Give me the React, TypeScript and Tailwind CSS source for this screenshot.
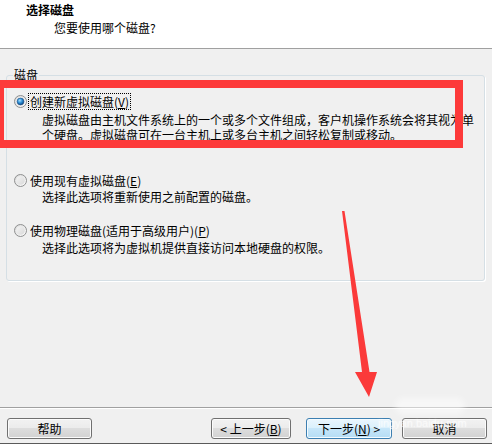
import React from "react";

function Radio({ checked, id }: { checked: boolean; id: string }) {
  return (
    <svg width="13" height="13" viewBox="0 0 13 13" className="shrink-0">
      <defs>
        <linearGradient id={`o${id}`} x1="0" y1="0" x2="1" y2="1">
          <stop offset="0" stopColor="#d8d8d8" />
          <stop offset="1" stopColor="#ffffff" />
        </linearGradient>
        <linearGradient id={`i${id}`} x1="0" y1="0" x2="1" y2="1">
          <stop offset="0" stopColor="#f4f4f4" />
          <stop offset="1" stopColor="#d9d9d9" />
        </linearGradient>
        <radialGradient id={`b${id}`} cx="0.4" cy="0.35" r="0.7">
          <stop offset="0" stopColor="#a7e0ff" />
          <stop offset="0.5" stopColor="#2d8fd5" />
          <stop offset="1" stopColor="#0b3f7a" />
        </radialGradient>
      </defs>
      <circle cx="6.5" cy="6.5" r="6" fill={`url(#o${id})`} stroke="#8e8f8f" strokeWidth="1" />
      <circle cx="6.5" cy="6.5" r="4.3" fill={`url(#i${id})`} />
      {checked && <circle cx="6.5" cy="6.5" r="3.4" fill={`url(#b${id})`} stroke="#1b4f86" strokeWidth="0.6" />}
    </svg>
  );
}

function Btn({ children, w, primary }: { children: React.ReactNode; w: string; primary?: boolean }) {
  return (
    <div
      className={
        primary
          ? `${w} h-[21px] flex items-center justify-center rounded-[3px] border border-[#3c7fb1] bg-[linear-gradient(to_bottom,#eaf6fd_0%,#d9f0fc_50%,#c6e6f9_50%,#b5ddf5_100%)] shadow-[inset_0_0_0_1px_#f4fbff] leading-[14px]`
          : `${w} h-[21px] flex items-center justify-center rounded-[3px] border border-[#707070] bg-[linear-gradient(to_bottom,#f2f2f2_0%,#ebebeb_50%,#dddddd_50%,#d2d2d2_100%)] shadow-[inset_0_0_0_1px_#fbfbfb] leading-[14px]`
      }
    >
      {children}
    </div>
  );
}

export default function App() {
  return (
    <div className="relative w-[492px] h-[444px] overflow-hidden bg-[#f0f0f0] text-[12px] text-black font-['Noto_Sans_CJK_SC','Noto_Sans',sans-serif]">
      {/* header */}
      <div className="h-[49px] bg-white border-b border-[#a0a0a0]">
        <div className="pt-[3px] pl-[26px] font-bold leading-[14px]">选择磁盘</div>
        <div className="pt-[4px] pl-[54px] leading-[14px]">您要使用哪个磁盘?</div>
      </div>

      {/* body */}
      <div className="h-[358px] pt-[26px]">
        <div className="relative ml-[6px] w-[479px] h-[206px] rounded-[3px] border border-[#d5dfe5] shadow-[1px_1px_0_#ffffff] pt-[17px] pl-[7px]">
          <div className="absolute left-[6px] top-[-7px] px-[1px] bg-[#f0f0f0] leading-[12px]">磁盘</div>

          {/* option 1 */}
          <div className="flex items-center h-[17px]">
            <Radio checked id="1" />
            <span className="ml-[2px] px-[1px] outline outline-1 outline-dotted outline-black leading-[15px]">
              创建新虚拟磁盘(<span className="underline">V</span>)
            </span>
          </div>
          <div className="mt-[2px] pl-[28px] leading-[15px] whitespace-nowrap">
            <div>虚拟磁盘由主机文件系统上的一个或多个文件组成，客户机操作系统会将其视为单</div>
            <div>个硬盘。虚拟磁盘可在一台主机上或多台主机之间轻松复制或移动。</div>
          </div>

          {/* option 2 */}
          <div className="flex items-center h-[16px] mt-[30px]">
            <Radio checked={false} id="2" />
            <span className="ml-[3px] leading-[15px]">
              使用现有虚拟磁盘(<span className="underline">E</span>)
            </span>
          </div>
          <div className="mt-[1px] pl-[28px] leading-[15px] whitespace-nowrap">选择此选项将重新使用之前配置的磁盘。</div>

          {/* option 3 */}
          <div className="flex items-center h-[16px] mt-[18px]">
            <Radio checked={false} id="3" />
            <span className="ml-[3px] leading-[15px]">
              使用物理磁盘(适用于高级用户)(<span className="underline">P</span>)
            </span>
          </div>
          <div className="mt-[2px] pl-[28px] leading-[15px] whitespace-nowrap">选择此选项将为虚拟机提供直接访问本地硬盘的权限。</div>
        </div>
      </div>

      {/* footer */}
      <div className="h-[37px] border-t border-[#a0a0a0] border-b border-b-[#5a5a5a] shadow-[inset_0_1px_0_#ffffff] pt-[10px] flex items-start">
        <div className="ml-[7px]">
          <Btn w="w-[85px]">帮助</Btn>
        </div>
        <div className="ml-auto mr-[5px] flex">
          <Btn w="w-[80px]">
            &lt; 上一步(<span className="underline">B</span>)
          </Btn>
          <div className="ml-[15px]">
            <Btn w="w-[86px]" primary>
              下一步(<span className="underline">N</span>) &gt;
            </Btn>
          </div>
          <div className="ml-[10px]">
            <Btn w="w-[85px]">取消</Btn>
          </div>
        </div>
      </div>

      {/* red highlight rectangle */}
      <div className="absolute left-[-4px] top-[80px] w-[467px] h-[68px] border-[8px] border-[#fd3a3a] pointer-events-none" />

      {/* red arrow */}
      <svg className="absolute left-0 top-0 pointer-events-none" width="492" height="444" viewBox="0 0 492 444">
        <polygon
          points="342,211 344.5,211 369.5,372 377,372 369,397 355,372 362,372"
          fill="#fb3a3a"
        />
      </svg>

      {/* watermark */}
      <div className="absolute left-[378px] top-[417px] text-[11px] leading-[12px] text-white/60 font-['Liberation_Sans',sans-serif] pointer-events-none [text-shadow:0_0_2px_rgba(255,255,255,0.6)]">
        jingyan.baidu.com
      </div>
      <div className="absolute left-[395px] top-[398px] w-[70px] h-[16px] rounded-full bg-white/50 blur-[3px] pointer-events-none" />
    </div>
  );
}
